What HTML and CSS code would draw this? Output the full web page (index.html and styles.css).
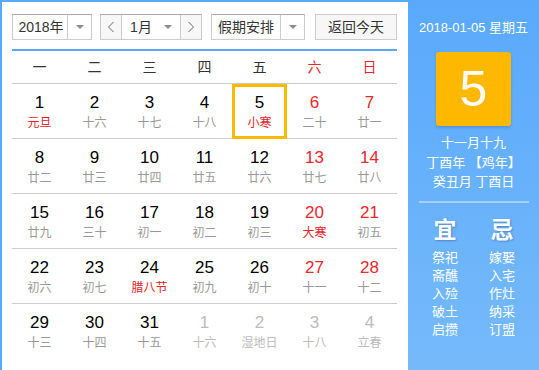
FILE: index.html
```html
<!DOCTYPE html>
<html lang="zh-CN">
<head>
	<meta charset="UTF-8">
	<title>万年历</title>
	<link rel="stylesheet" href="styles.css">
</head>
<body>
	<div class="calendar">
		<div class="main">
			<div class="toolbar">
				<div class="sel sel-year">
					<span class="sel-text">2018年</span>
					<span class="sel-arrow"><i class="tri"></i></span>
				</div>
				<div class="sel sel-month">
					<span class="nav">
						<svg width="8" height="12" viewBox="0 0 8 12"><polyline points="6.5,1 1.5,6 6.5,11" fill="none" stroke="#666" stroke-width="1"/></svg>
					</span>
					<span class="sel-text">1月</span>
					<span class="month-arrow"><i class="tri"></i></span>
					<span class="nav">
						<svg width="8" height="12" viewBox="0 0 8 12"><polyline points="1.5,1 6.5,6 1.5,11" fill="none" stroke="#666" stroke-width="1"/></svg>
					</span>
				</div>
				<div class="sel sel-holiday">
					<span class="sel-text">假期安排</span>
					<span class="sel-arrow"><i class="tri"></i></span>
				</div>
				<div class="btn-today">返回今天</div>
			</div>

			<div class="week">
				<span>一</span><span>二</span><span>三</span><span>四</span><span>五</span><span class="red">六</span><span class="red">日</span>
			</div>

			<div class="days">
				<div class="day"><b>1</b><em class="fest">元旦</em></div>
				<div class="day"><b>2</b><em>十六</em></div>
				<div class="day"><b>3</b><em>十七</em></div>
				<div class="day"><b>4</b><em>十八</em></div>
				<div class="day today"><b>5</b><em class="fest">小寒</em></div>
				<div class="day wknd"><b>6</b><em>二十</em></div>
				<div class="day wknd"><b>7</b><em>廿一</em></div>

				<div class="day"><b>8</b><em>廿二</em></div>
				<div class="day"><b>9</b><em>廿三</em></div>
				<div class="day"><b>10</b><em>廿四</em></div>
				<div class="day"><b>11</b><em>廿五</em></div>
				<div class="day"><b>12</b><em>廿六</em></div>
				<div class="day wknd"><b>13</b><em>廿七</em></div>
				<div class="day wknd"><b>14</b><em>廿八</em></div>

				<div class="day"><b>15</b><em>廿九</em></div>
				<div class="day"><b>16</b><em>三十</em></div>
				<div class="day"><b>17</b><em>初一</em></div>
				<div class="day"><b>18</b><em>初二</em></div>
				<div class="day"><b>19</b><em>初三</em></div>
				<div class="day wknd"><b>20</b><em class="fest">大寒</em></div>
				<div class="day wknd"><b>21</b><em>初五</em></div>

				<div class="day"><b>22</b><em>初六</em></div>
				<div class="day"><b>23</b><em>初七</em></div>
				<div class="day"><b>24</b><em class="fest">腊八节</em></div>
				<div class="day"><b>25</b><em>初九</em></div>
				<div class="day"><b>26</b><em>初十</em></div>
				<div class="day wknd"><b>27</b><em>十一</em></div>
				<div class="day wknd"><b>28</b><em>十二</em></div>

				<div class="day last"><b>29</b><em>十三</em></div>
				<div class="day last"><b>30</b><em>十四</em></div>
				<div class="day last"><b>31</b><em>十五</em></div>
				<div class="day last other"><b>1</b><em>十六</em></div>
				<div class="day last other"><b>2</b><em>湿地日</em></div>
				<div class="day last other"><b>3</b><em>十八</em></div>
				<div class="day last other"><b>4</b><em>立春</em></div>
			</div>
		</div>

		<div class="side">
			<div class="side-date">2018-01-05 星期五</div>
			<div class="side-day">5</div>
			<div class="side-lunar">
				<p>十一月十九</p>
				<p>丁酉年 【鸡年】</p>
				<p>癸丑月 丁酉日</p>
			</div>
			<div class="side-line"></div>
			<div class="yiji">
				<ul>
					<li class="yiji-title">宜</li>
					<li>祭祀</li>
					<li>斋醮</li>
					<li>入殓</li>
					<li>破土</li>
					<li>启攒</li>
				</ul>
				<ul>
					<li class="yiji-title">忌</li>
					<li>嫁娶</li>
					<li>入宅</li>
					<li>作灶</li>
					<li>纳采</li>
					<li>订盟</li>
				</ul>
			</div>
		</div>
	</div>
</body>
</html>
```

FILE: styles.css
```css
* {
	margin: 0;
	padding: 0;
	list-style: none;
	box-sizing: border-box;
}

body {
	font-family: "Liberation Sans", "Noto Sans CJK SC", sans-serif;
	background: #fff;
	overflow: hidden;
}

.calendar {
	display: flex;
	width: 539px;
	height: 380px;
	border: 2px solid #5aa9fc;
	border-right: none;
}

/* 左侧日历 */
.main {
	width: 406px;
	padding: 12px 0 0 10px;
	background: #fff;
}

.toolbar {
	display: flex;
	width: 385px;
	height: 26px;
	font-size: 14px;
	color: #333;
}

.sel {
	display: flex;
	height: 26px;
	border: 1px solid #ccc;
	border-top-color: #a9a9a9;
	background: #fff;
}

.sel-text {
	display: flex;
	align-items: center;
	justify-content: center;
	flex: 1;
	line-height: 24px;
}

.sel-arrow {
	display: flex;
	align-items: center;
	justify-content: center;
	width: 24px;
	border-left: 1px solid #ccc;
}

.tri {
	width: 0;
	height: 0;
	border-left: 4px solid transparent;
	border-right: 4px solid transparent;
	border-top: 4px solid #8c8c8c;
}

.sel-year {
	width: 80px;
}

.sel-year .sel-text {
	padding-left: 2px;
}

.sel-month {
	width: 102px;
	margin-left: 8px;
}

.sel-month .sel-text {
	flex: none;
	width: 34px;
	padding-left: 4px;
}

.month-arrow {
	display: flex;
	align-items: center;
	justify-content: center;
	width: 24px;
}

.nav {
	display: flex;
	align-items: center;
	justify-content: center;
	width: 21px;
	background: #f7f7f7;
}

.nav:first-child {
	border-right: 1px solid #ccc;
}

.nav:last-child {
	border-left: 1px solid #ccc;
}

.sel-holiday {
	width: 94px;
	margin-left: 9px;
}

.btn-today {
	width: 82px;
	height: 26px;
	margin-left: 10px;
	border: 1px solid #ccc;
	background: #f7f7f7;
	text-align: center;
	line-height: 24px;
}

.week {
	display: grid;
	grid-template-columns: repeat(7, 55px);
	width: 385px;
	margin-top: 9px;
	border-top: 2px solid #5aa9fc;
	border-bottom: 1px solid #ccc;
	font-size: 14px;
	line-height: 32px;
	color: #333;
	text-align: center;
}

.red {
	color: #e8262e;
}

.days {
	display: grid;
	grid-template-columns: repeat(7, 55px);
	width: 385px;
}

.day {
	height: 55px;
	padding-top: 9px;
	border-bottom: 1px solid #ccc;
	text-align: center;
}

.day.last {
	border-bottom: none;
}

.day b {
	display: block;
	font-size: 17px;
	font-weight: normal;
	line-height: 20px;
	color: #000;
}

.day em {
	display: block;
	font-size: 12px;
	font-style: normal;
	line-height: 20px;
	color: #999;
}

.day.wknd b {
	color: #e8262e;
}

.day em.fest {
	color: #e0222a;
}

.day.other b,
.day.other em {
	color: #bbb;
}

.day.today {
	padding-top: 6px;
	border: 3px solid #ffb800;
}

/* 右侧详情 */
.side {
	width: 131px;
	padding-top: 16px;
	background: linear-gradient(#5aa9fc, #76bafa);
	color: #fff;
	text-align: center;
}

.side-date {
	font-size: 13px;
	line-height: 20px;
}

.side-day {
	width: 75px;
	height: 74px;
	margin: 14px auto 0;
	border-radius: 3px;
	background: #ffb800;
	box-shadow: 0 2px 3px rgba(0, 0, 0, 0.15);
	font-size: 50px;
	line-height: 74px;
}

.side-lunar {
	margin-top: 7px;
	font-size: 13px;
	line-height: 19.5px;
}

.side-line {
	width: 110px;
	height: 2px;
	margin: 9px auto 0;
	background: rgba(255, 255, 255, 0.4);
}

.yiji {
	display: flex;
	justify-content: center;
	gap: 31px;
	margin-top: 14px;
	font-size: 13px;
	line-height: 18px;
}

.yiji-title {
	margin-bottom: 6px;
	font-size: 23px;
	font-weight: bold;
	line-height: 26px;
	text-shadow: 1px 1px 2px rgba(0, 0, 0, 0.25);
}
```
